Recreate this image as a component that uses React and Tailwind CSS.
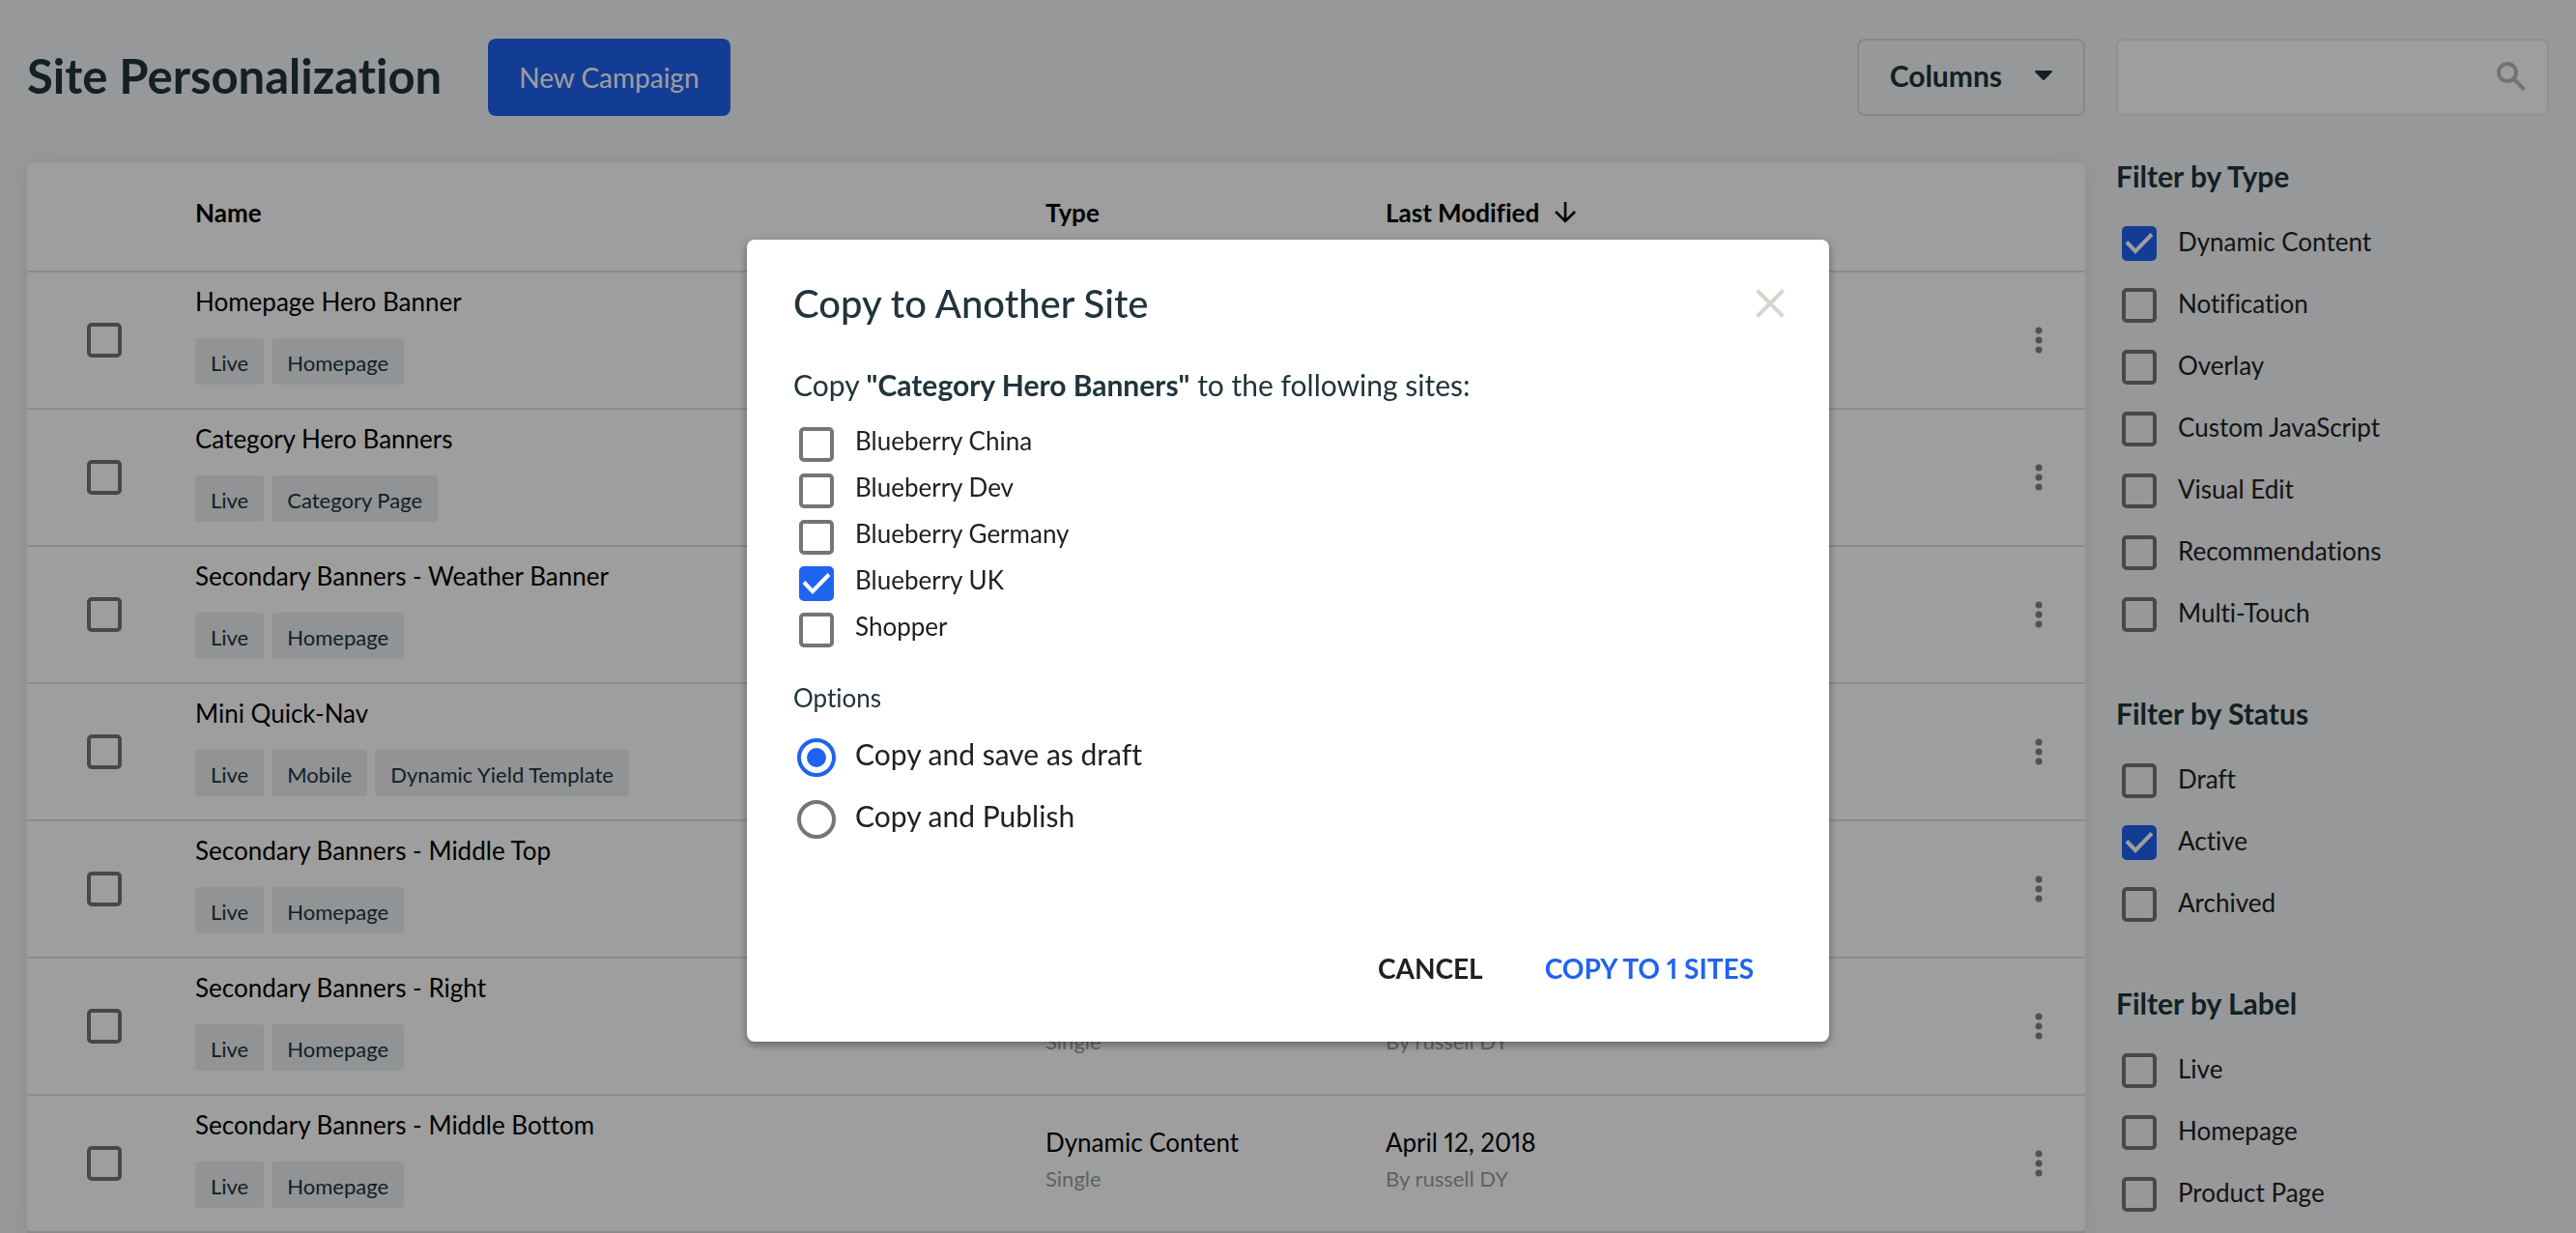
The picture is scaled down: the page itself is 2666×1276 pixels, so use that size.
import { useState } from "react";

const campaigns = [
  { name: "Homepage Hero Banner", tags: ["Live", "Homepage"] },
  { name: "Category Hero Banners", tags: ["Live", "Category Page"] },
  { name: "Secondary Banners - Weather Banner", tags: ["Live", "Homepage"] },
  { name: "Mini Quick-Nav", tags: ["Live", "Mobile", "Dynamic Yield Template"] },
  { name: "Secondary Banners - Middle Top", tags: ["Live", "Homepage"] },
  { name: "Secondary Banners - Right", tags: ["Live", "Homepage"] },
  { name: "Secondary Banners - Middle Bottom", tags: ["Live", "Homepage"] },
];

const filters = [
  {
    title: "Filter by Type",
    options: [
      "Dynamic Content",
      "Notification",
      "Overlay",
      "Custom JavaScript",
      "Visual Edit",
      "Recommendations",
      "Multi-Touch",
    ],
  },
  { title: "Filter by Status", options: ["Draft", "Active", "Archived"] },
  { title: "Filter by Label", options: ["Live", "Homepage", "Product Page"] },
];

const sites = [
  "Blueberry China",
  "Blueberry Dev",
  "Blueberry Germany",
  "Blueberry UK",
  "Shopper",
];

const toggle = (list, item) =>
  list.includes(item) ? list.filter((i) => i !== item) : [...list, item];

const Checkbox = (props) => (
  <span className="grid size-9 shrink-0">
    <input
      type="checkbox"
      className="peer col-start-1 row-start-1 size-9 appearance-none rounded-[5px] border-4 border-[#757575] checked:border-[#2063f0] checked:bg-[#2063f0]"
      {...props}
    />
    <svg
      viewBox="0 0 36 36"
      className="pointer-events-none invisible col-start-1 row-start-1 size-9 peer-checked:visible"
      fill="none"
      stroke="#fff"
      strokeWidth="4"
    >
      <path d="M5 16.5 14 26 31 8.5" />
    </svg>
  </span>
);

const Header = () => (
  <header className="mb-12 flex h-20 items-center">
    <h1 className="mr-12 pb-1 text-[49px] leading-none font-bold">
      Site Personalization
    </h1>
    <button className="h-20 rounded-lg bg-[#2063f0] px-8 text-[28px] text-white">
      New Campaign
    </button>
    <button className="ml-auto flex h-20 items-center gap-[34px] rounded-lg border-2 border-[#dedad4] px-8 pb-1 text-[30px] font-bold">
      Columns
      <svg width="18" height="10" viewBox="0 0 18 10" fill="currentColor">
        <path d="M1 0h16a1 1 0 0 1 .7 1.7L10 9.4a1.4 1.4 0 0 1-2 0L.3 1.7A1 1 0 0 1 1 0z" />
      </svg>
    </button>
    <div className="relative ml-8 w-[448px]">
      <input
        type="search"
        aria-label="Search campaigns"
        className="block h-20 w-full rounded-lg border-2 border-[#e6e8ea] bg-white pr-16 pl-6 text-[28px]"
      />
      <svg
        viewBox="0 0 30 30"
        className="absolute top-6 right-6 size-[30px]"
        fill="none"
        stroke="#b8b8b8"
        strokeWidth="4"
      >
        <circle cx="11" cy="11" r="9" />
        <path d="m17.5 17.5 11 11.500" />
      </svg>
    </div>
  </header>
);

const CampaignTable = () => {
  const [selected, setSelected] = useState([]);

  return (
    <div className="min-w-0 flex-1 self-start rounded-lg bg-white shadow-[0_2px_24px_rgba(60,90,120,0.12)]">
      <table className="w-full table-fixed border-separate border-spacing-0 text-left text-black">
        <colgroup>
          <col className="w-[174px]" />
          <col />
          <col className="w-[352px]" />
          <col className="w-[604px]" />
          <col className="w-[120px]" />
        </colgroup>
        <thead>
          <tr className="text-[26px] leading-9 font-bold [&>th]:h-[114px] [&>th]:border-b-2 [&>th]:border-[#dfdfdf] [&>th]:pb-2">
            <th aria-label="Select" />
            <th>Name</th>
            <th>Type</th>
            <th aria-sort="descending">
              <span className="flex items-center gap-4">
                Last Modified
                <svg
                  width="22"
                  height="22"
                  viewBox="0 0 22 22"
                  fill="none"
                  stroke="currentColor"
                  strokeWidth="2.6"
                >
                  <path d="M11 0v20M1 10l10 10 10-10" />
                </svg>
              </span>
            </th>
            <th aria-label="Actions" />
          </tr>
        </thead>
        <tbody>
          {campaigns.map(({ name, tags }) => (
            <tr
              key={name}
              className="text-[26px] leading-9 [&>td]:border-b-2 [&>td]:border-[#dfdfdf]"
            >
              <td className="pl-[62px]">
                <Checkbox
                  aria-label={`Select ${name}`}
                  checked={selected.includes(name)}
                  onChange={() => setSelected(toggle(selected, name))}
                />
              </td>
              <td className="pt-3 pb-6">
                <div>{name}</div>
                <div className="mt-5 flex gap-2">
                  {tags.map((tag) => (
                    <span
                      key={tag}
                      className="rounded bg-[#eaedf0] px-4 pt-3 pb-2 text-[22px] leading-7 text-[#20343b]"
                    >
                      {tag}
                    </span>
                  ))}
                </div>
              </td>
              <td className="pb-1">
                <div>Dynamic Content</div>
                <div className="text-[22px] leading-10 text-[#96a0a4]">
                  Single
                </div>
              </td>
              <td className="pb-1">
                <div>April 12, 2018</div>
                <div className="text-[22px] leading-10 text-[#96a0a4]">
                  By russell DY
                </div>
              </td>
              <td className="pr-8">
                <button aria-label={`Actions for ${name}`} className="ml-auto block">
                  <svg width="32" height="32" viewBox="0 0 32 32" fill="#7b868b">
                    <circle cx="16" cy="6" r="3.5" />
                    <circle cx="16" cy="16" r="3.5" />
                    <circle cx="16" cy="26" r="3.5" />
                  </svg>
                </button>
              </td>
            </tr>
          ))}
        </tbody>
      </table>
    </div>
  );
};

const Filters = () => {
  const [active, setActive] = useState([
    "Filter by Type/Dynamic Content",
    "Filter by Status/Active",
  ]);

  return (
    <aside className="flex w-[448px] shrink-0 flex-col gap-14">
      {filters.map(({ title, options }) => (
        <section key={title}>
          <h2 className="mb-6 text-[30px] leading-7 font-bold">{title}</h2>
          {options.map((option) => {
            const key = `${title}/${option}`;
            return (
              <label
                key={key}
                className="flex h-16 items-center gap-[22px] pl-1.5 text-[26px] text-[#212121]"
              >
                <Checkbox
                  checked={active.includes(key)}
                  onChange={() => setActive(toggle(active, key))}
                />
                <span className="pb-1">{option}</span>
              </label>
            );
          })}
        </section>
      ))}
    </aside>
  );
};

const CopyDialog = () => {
  const [targets, setTargets] = useState(["Blueberry UK"]);
  const [mode, setMode] = useState("Copy and save as draft");

  return (
    <div className="fixed inset-0 flex items-start justify-center bg-black/38 pt-[248px]">
      <div
        role="dialog"
        aria-modal="true"
        aria-labelledby="copy-title"
        className="w-[1120px] rounded-lg bg-white pt-10 pr-[46px] pb-10 pl-12 shadow-[0_3px_8px_rgba(0,0,0,0.4)]"
      >
        <div className="flex items-center justify-between">
          <h2 id="copy-title" className="text-[40px] leading-[52px] font-medium">
            Copy to Another Site
          </h2>
          <button aria-label="Close">
            <svg
              width="30"
              height="30"
              viewBox="0 0 30 30"
              fill="none"
              stroke="#d6d6d0"
              strokeWidth="4"
            >
              <path d="m1.5 1.5 27 27M28.5 1.5l-27 27" />
            </svg>
          </button>
        </div>

        <p className="mt-10 text-[30px] leading-9">
          Copy <b>"Category Hero Banners"</b> to the following sites:
        </p>

        <div className="mt-5 text-[26px] text-[#212121]">
          {sites.map((site) => (
            <label key={site} className="flex h-12 items-center gap-[22px] pl-1.5">
              <Checkbox
                checked={targets.includes(site)}
                onChange={() => setTargets(toggle(targets, site))}
              />
              <span className="pb-2 leading-8">{site}</span>
            </label>
          ))}
        </div>

        <fieldset className="mt-7">
          <legend className="mb-3 text-[26px] leading-9">Options</legend>
          {["Copy and save as draft", "Copy and Publish"].map((option) => (
            <label
              key={option}
              className="flex h-16 items-center gap-5 pl-1 text-[30px] text-[#212121]"
            >
              <input
                type="radio"
                name="copy-mode"
                checked={mode === option}
                onChange={() => setMode(option)}
                className="size-10 appearance-none rounded-full border-4 border-[#757575] bg-white bg-clip-content p-1.5 checked:border-[#2063f0] checked:bg-[#2063f0]"
              />
              <span className="pb-2">{option}</span>
            </label>
          ))}
        </fieldset>

        <div className="mt-[86px] flex justify-end text-[28px] font-bold">
          <button className="h-18 px-8 text-[#212121]">CANCEL</button>
          <button className="h-18 px-8 text-[#2063f0]">
            COPY TO {targets.length} SITES
          </button>
        </div>
      </div>
    </div>
  );
};

export default function App() {
  return (
    <div className="min-h-screen bg-[#f4f6f7] px-7 pt-10 font-[Lato,sans-serif] text-[#20343b] [font-feature-settings:'liga'_0,'pnum'_1]">
      <Header />
      <main className="flex gap-8">
        <CampaignTable />
        <Filters />
      </main>
      <CopyDialog />
    </div>
  );
}
